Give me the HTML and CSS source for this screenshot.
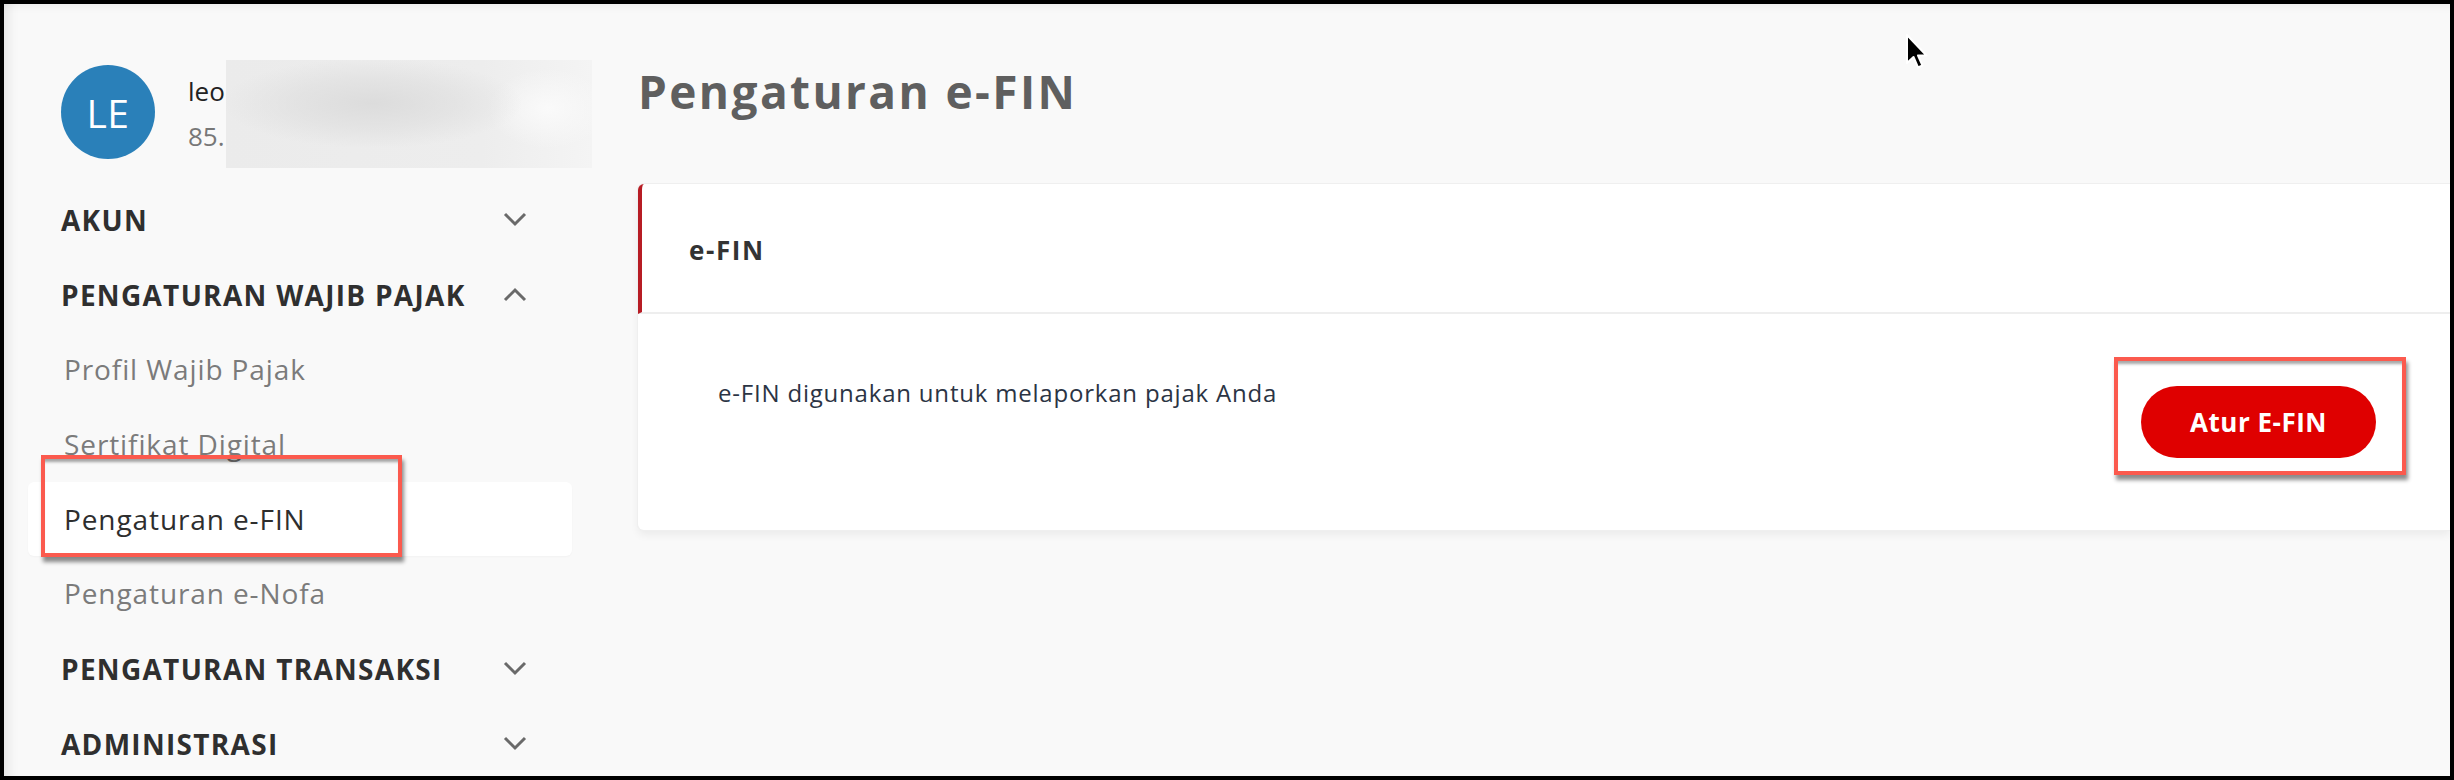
FILE: index.html
```html
<!DOCTYPE html>
<html lang="id">
<head>
<meta charset="utf-8">
<title>Pengaturan e-FIN</title>
<link rel="stylesheet" href="styles.css">
</head>
<body>
<div class="frame">
  <aside class="sidebar">
    <div class="profile">
      <div class="avatar">LE</div>
      <div class="who">
        <div class="name">leo</div>
        <div class="npwp">85.</div>
      </div>
      <div class="redact"></div>
    </div>
    <nav class="nav">
      <div class="group">
        <span>AKUN</span>
        <svg class="chev" width="24" height="15" viewBox="0 0 24 15"><polyline points="2,2 12,12 22,2" fill="none" stroke="#6a6a6a" stroke-width="3"/></svg>
      </div>
      <div class="group">
        <span>PENGATURAN WAJIB PAJAK</span>
        <svg class="chev" width="24" height="15" viewBox="0 0 24 15"><polyline points="2,13 12,3 22,13" fill="none" stroke="#6a6a6a" stroke-width="3"/></svg>
      </div>
      <div class="item">Profil Wajib Pajak</div>
      <div class="item">Sertifikat Digital</div>
      <div class="item active">Pengaturan e-FIN<span class="mark mark-nav"></span></div>
      <div class="item">Pengaturan e-Nofa</div>
      <div class="group">
        <span>PENGATURAN TRANSAKSI</span>
        <svg class="chev" width="24" height="15" viewBox="0 0 24 15"><polyline points="2,2 12,12 22,2" fill="none" stroke="#6a6a6a" stroke-width="3"/></svg>
      </div>
      <div class="group">
        <span>ADMINISTRASI</span>
        <svg class="chev" width="24" height="15" viewBox="0 0 24 15"><polyline points="2,2 12,12 22,2" fill="none" stroke="#6a6a6a" stroke-width="3"/></svg>
      </div>
    </nav>
  </aside>
  <main class="main">
    <h1 class="title">Pengaturan e-FIN</h1>
    <section class="card">
      <div class="card-head">e-FIN</div>
      <div class="card-body">
        <p class="desc">e-FIN digunakan untuk melaporkan pajak Anda</p>
        <button class="btn">Atur E-FIN<span class="mark mark-btn"></span></button>
      </div>
    </section>
  </main>
  <svg class="cursor" width="24" height="38" viewBox="0 0 24 38">
    <path d="M2 2 L2 30 L8.5 24 L13 34.5 L17.5 32.5 L13 22.5 L21.5 22.5 Z" fill="#000" stroke="#fff" stroke-width="2" stroke-linejoin="round"/>
  </svg>
</div>
</body>
</html>
```

FILE: styles.css
```css
* { box-sizing: border-box; }
html, body { margin: 0; padding: 0; }
body {
  font-family: "Open Sans", "Liberation Sans", sans-serif;
  background: #000;
}
.frame {
  width: 2454px;
  height: 780px;
  border: 4px solid #000;
  background: #f9f9f9;
  display: flex;
  position: relative;
  overflow: hidden;
  box-shadow: inset 14px 0 12px -10px rgba(0,0,0,0.09), inset 0 12px 10px -10px rgba(0,0,0,0.05);
}
.sidebar {
  width: 568px;
  flex: none;
  padding: 61px 0 0 24px;
}
.profile {
  display: flex;
  align-items: center;
  padding-left: 33px;
  height: 94px;
  position: relative;
}
.avatar {
  width: 94px;
  height: 94px;
  border-radius: 50%;
  background: #2a80b9;
  color: #fff;
  font-size: 39px;
  display: flex;
  align-items: center;
  justify-content: center;
  letter-spacing: 0.5px;
  flex: none;
}
.who {
  margin-left: 33px;
  margin-top: 3px;
}
.name {
  font-size: 26px;
  line-height: 45px;
  color: #222;
}
.npwp {
  font-size: 26px;
  line-height: 45px;
  color: #777;
}
.redact {
  position: absolute;
  left: 198px;
  top: -5px;
  width: 366px;
  height: 108px;
  background:
    radial-gradient(ellipse 150px 45px at 40% 40%, #dcdcdc 0%, rgba(222,222,222,0.6) 55%, rgba(236,236,236,0) 100%),
    radial-gradient(ellipse 60px 40px at 88% 45%, #fafafa 0%, rgba(250,250,250,0) 100%),
    linear-gradient(90deg, #ebebeb 0%, #ededed 70%, #f4f4f4 100%);
}
.nav {
  width: 544px;
  margin-top: 23px;
}
.group {
  height: 75px;
  display: flex;
  align-items: center;
  justify-content: space-between;
  padding: 0 45px 0 33px;
  font-weight: 700;
  font-size: 28px;
  letter-spacing: 1.3px;
  color: #2f2f2f;
}
.chev { flex: none; margin-top: -1px; }
.item {
  height: 75px;
  line-height: 75px;
  padding-left: 36px;
  font-size: 28px;
  letter-spacing: 0.9px;
  color: #7b7b7b;
  position: relative;
}
.item.active {
  background: #fff;
  color: #2e2e2e;
  border-radius: 6px;
  height: 74px;
  line-height: 74px;
  box-shadow: 0 1px 2px rgba(0,0,0,0.03);
}
.mark {
  position: absolute;
  border: 4px solid #fb5a4e;
  box-shadow: 2px 5px 4px rgba(0,0,0,0.45), inset 0 5px 3px -2px rgba(0,0,0,0.35);
  pointer-events: none;
}
.mark-nav {
  left: 13px;
  top: -27px;
  width: 361px;
  height: 102px;
}
.main {
  flex: 1;
  margin-left: 66px;
  padding-top: 59px;
  min-width: 0;
}
.title {
  margin: 0;
  font-size: 46px;
  line-height: 56px;
  font-weight: 700;
  letter-spacing: 2.4px;
  color: #5f5f5f;
}
.card {
  margin-top: 65px;
  background: #fff;
  border-radius: 6px 0 0 6px;
  box-shadow: 0 0 0 1px #efefef, 0 5px 9px rgba(0,0,0,0.06);
}
.card-head {
  height: 130px;
  display: flex;
  align-items: center;
  padding: 3px 0 0 47px;
  border-left: 4px solid #b71c24;
  border-top-left-radius: 6px;
  border-bottom: 2px solid #eeeeee;
  font-size: 26px;
  font-weight: 700;
  letter-spacing: 1.6px;
  color: #333;
}
.card-body {
  height: 216px;
  display: flex;
  justify-content: space-between;
  align-items: flex-start;
  padding: 0 74px 0 80px;
}
.desc {
  margin: 63px 0 0 0;
  font-size: 24px;
  line-height: 32px;
  letter-spacing: 0.8px;
  color: #2b3444;
}
.btn {
  margin-top: 72px;
  width: 235px;
  height: 72px;
  border: none;
  border-radius: 36px;
  background: #df0000;
  color: #fff;
  font-family: "Open Sans", "Liberation Sans", sans-serif;
  font-size: 26px;
  font-weight: 700;
  letter-spacing: 0.5px;
  position: relative;
  padding: 0;
}
.mark-btn {
  left: -27px;
  top: -29px;
  width: 292px;
  height: 118px;
}
.cursor {
  position: absolute;
  left: 1901px;
  top: 29px;
}
```
